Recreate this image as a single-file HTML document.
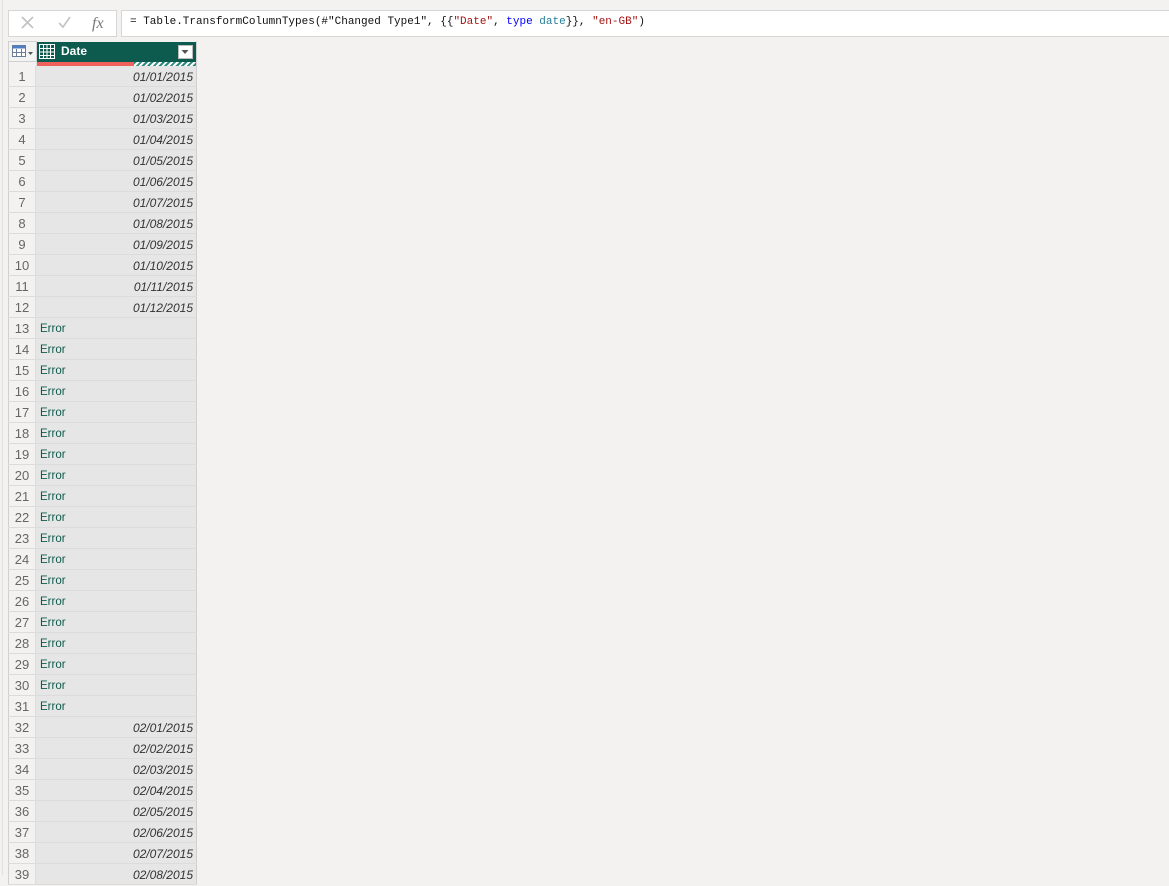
<!DOCTYPE html>
<html><head><meta charset="utf-8"><style>
body{margin:0;width:1169px;height:875px;background:#f3f2f1;position:relative;overflow:hidden;font-family:"Segoe UI","Liberation Sans",sans-serif}
.box{position:absolute;background:#fff;border:1px solid #d6d6d6;box-sizing:border-box}
.f{position:absolute;left:130px;top:16px;font-family:"Liberation Mono",monospace;font-size:11px;color:#111;white-space:pre}
.grid{position:absolute;left:8px;top:41px;width:189px;height:840px;box-sizing:border-box;border-left:1px solid #d0d0d0;border-right:1px solid #d0d0d0}
.r{position:absolute;left:8px;width:189px;height:21px;box-sizing:border-box;border-bottom:1px solid #dcdcdc;font-size:12px}
.n{position:absolute;left:0;width:28px;height:20px;line-height:22px;text-align:center;color:#666;font-size:13px;background:#f3f2f1;border-left:1px solid #d0d0d0;border-right:1px solid #dcdcdc;box-sizing:border-box}
.v{position:absolute;left:28px;right:0;height:20px;line-height:22px;background:#e6e6e6;border-right:1px solid #d0d0d0}
.d{text-align:right;padding-right:3px;font-style:italic;color:#333}
.e{padding-left:4px;color:#0f5a4c;font-size:11.5px}
</style></head><body>
<div style="position:absolute;left:2px;top:0;width:1px;height:875px;background:#e0e0e0"></div>
<div class="box" style="left:8px;top:10px;width:109px;height:27px"></div>
<svg style="position:absolute;left:18px;top:14px" width="90" height="18">
<path d="M4 3 L15 14 M15 3 L4 14" stroke="#c2c2c2" stroke-width="1.6" fill="none"/>
<path d="M41 9 L45 13 L52 3" stroke="#c2c2c2" stroke-width="1.6" fill="none"/>
<text x="74" y="14" font-family="Liberation Serif" font-style="italic" font-size="16" fill="#777">fx</text>
</svg>
<div class="box" style="left:121px;top:10px;width:1060px;height:27px"></div>
<div class="f">= Table.TransformColumnTypes(#"Changed Type1", {{<span style="color:#a31515">"Date"</span>, <span style="color:#0000ff">type</span> <span style="color:#267f99">date</span>}}, <span style="color:#a31515">"en-GB"</span>)</div>
<div class="grid"></div>
<div style="position:absolute;left:8px;top:41px;width:29px;height:21px;background:#f3f3f3;border:1px solid #d0d0d0;box-sizing:border-box"></div>
<svg style="position:absolute;left:12px;top:45px" width="22" height="13">
<rect x="0.5" y="0.5" width="13" height="11" fill="#fff" stroke="#6a7c96"/>
<rect x="0.5" y="0.5" width="13" height="3" fill="#4f7fc0"/>
<path d="M0 7.5H14M4.5 4V12M9.5 4V12" stroke="#6a7c96"/>
<path d="M16 7h5l-2.5 3z" fill="#555"/>
</svg>
<div style="position:absolute;left:37px;top:42px;width:159px;height:20px;background:#0d5a4e"></div>
<svg style="position:absolute;left:39px;top:44px" width="17" height="16">
<rect x="0.5" y="0.5" width="15" height="14" fill="none" stroke="#fff"/>
<path d="M0.5 4.5H16M0.5 8H16M0.5 11.5H16M4.5 0V15M8 0V15M11.5 0V15" stroke="#fff" stroke-width="1"/>
</svg>
<div style="position:absolute;left:61px;top:44px;color:#fff;font-weight:bold;font-size:12px">Date</div>
<div style="position:absolute;left:178px;top:45px;width:15px;height:14px;background:#fff;border:1px solid #bbb;box-sizing:border-box"></div>
<svg style="position:absolute;left:181px;top:49px" width="9" height="6"><path d="M0.5 1h7l-3.5 4z" fill="#555"/></svg>
<div style="position:absolute;left:37px;top:62px;width:97px;height:4px;background:#f0615b"></div>
<div style="position:absolute;left:134px;top:62px;width:62px;height:4px;background:repeating-linear-gradient(135deg,#2a8a7b 0 2px,#fff 2px 4px)"></div>
<div style="position:absolute;left:8px;top:62px;width:29px;height:4px;background:#f3f2f1;border-left:1px solid #d0d0d0;border-right:1px solid #dcdcdc;box-sizing:border-box"></div>

<div class="r" style="top:66px"><div class="n">1</div><div class="v d">01/01/2015</div></div>
<div class="r" style="top:87px"><div class="n">2</div><div class="v d">01/02/2015</div></div>
<div class="r" style="top:108px"><div class="n">3</div><div class="v d">01/03/2015</div></div>
<div class="r" style="top:129px"><div class="n">4</div><div class="v d">01/04/2015</div></div>
<div class="r" style="top:150px"><div class="n">5</div><div class="v d">01/05/2015</div></div>
<div class="r" style="top:171px"><div class="n">6</div><div class="v d">01/06/2015</div></div>
<div class="r" style="top:192px"><div class="n">7</div><div class="v d">01/07/2015</div></div>
<div class="r" style="top:213px"><div class="n">8</div><div class="v d">01/08/2015</div></div>
<div class="r" style="top:234px"><div class="n">9</div><div class="v d">01/09/2015</div></div>
<div class="r" style="top:255px"><div class="n">10</div><div class="v d">01/10/2015</div></div>
<div class="r" style="top:276px"><div class="n">11</div><div class="v d">01/11/2015</div></div>
<div class="r" style="top:297px"><div class="n">12</div><div class="v d">01/12/2015</div></div>
<div class="r" style="top:318px"><div class="n">13</div><div class="v e">Error</div></div>
<div class="r" style="top:339px"><div class="n">14</div><div class="v e">Error</div></div>
<div class="r" style="top:360px"><div class="n">15</div><div class="v e">Error</div></div>
<div class="r" style="top:381px"><div class="n">16</div><div class="v e">Error</div></div>
<div class="r" style="top:402px"><div class="n">17</div><div class="v e">Error</div></div>
<div class="r" style="top:423px"><div class="n">18</div><div class="v e">Error</div></div>
<div class="r" style="top:444px"><div class="n">19</div><div class="v e">Error</div></div>
<div class="r" style="top:465px"><div class="n">20</div><div class="v e">Error</div></div>
<div class="r" style="top:486px"><div class="n">21</div><div class="v e">Error</div></div>
<div class="r" style="top:507px"><div class="n">22</div><div class="v e">Error</div></div>
<div class="r" style="top:528px"><div class="n">23</div><div class="v e">Error</div></div>
<div class="r" style="top:549px"><div class="n">24</div><div class="v e">Error</div></div>
<div class="r" style="top:570px"><div class="n">25</div><div class="v e">Error</div></div>
<div class="r" style="top:591px"><div class="n">26</div><div class="v e">Error</div></div>
<div class="r" style="top:612px"><div class="n">27</div><div class="v e">Error</div></div>
<div class="r" style="top:633px"><div class="n">28</div><div class="v e">Error</div></div>
<div class="r" style="top:654px"><div class="n">29</div><div class="v e">Error</div></div>
<div class="r" style="top:675px"><div class="n">30</div><div class="v e">Error</div></div>
<div class="r" style="top:696px"><div class="n">31</div><div class="v e">Error</div></div>
<div class="r" style="top:717px"><div class="n">32</div><div class="v d">02/01/2015</div></div>
<div class="r" style="top:738px"><div class="n">33</div><div class="v d">02/02/2015</div></div>
<div class="r" style="top:759px"><div class="n">34</div><div class="v d">02/03/2015</div></div>
<div class="r" style="top:780px"><div class="n">35</div><div class="v d">02/04/2015</div></div>
<div class="r" style="top:801px"><div class="n">36</div><div class="v d">02/05/2015</div></div>
<div class="r" style="top:822px"><div class="n">37</div><div class="v d">02/06/2015</div></div>
<div class="r" style="top:843px"><div class="n">38</div><div class="v d">02/07/2015</div></div>
<div class="r" style="top:864px"><div class="n">39</div><div class="v d">02/08/2015</div></div>
</body></html>
